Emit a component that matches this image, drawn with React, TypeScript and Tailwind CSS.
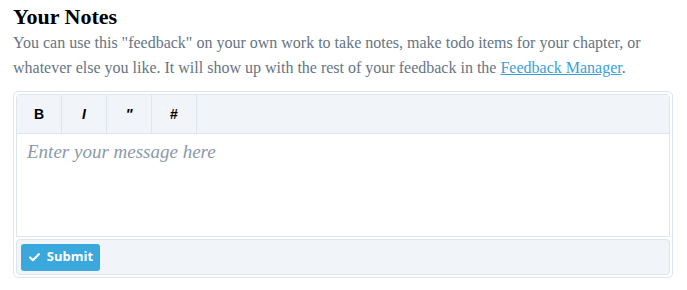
import { Check } from 'lucide-react'

const tools = [
  { label: 'B', cls: '' },
  { label: 'I', cls: 'italic' },
  { label: '"', cls: 'italic text-[15px]' },
  { label: '#', cls: '' },
]

export default function App() {
  return (
    <main className="bg-white px-[13px] pt-[4px] font-['Liberation_Serif',serif]">
      <h2 className="text-[22px] font-bold leading-[26px] text-black">Your Notes</h2>
      <p className="text-[16px] leading-[25px] text-[#667482]">
        You can use this "feedback" on your own work to take notes, make todo items for your chapter, or whatever else you like. It will show up with the rest of your feedback in the{' '}
        <a href="#" className="text-[#3aa0d8] underline">Feedback Manager</a>.
      </p>
      <div className="mt-[11px] w-[660px] rounded-[5px] border border-[#dde5ed] p-[2px]">
        <div className="rounded-t-[4px] border border-[#dde5ed]">
          <div className="flex h-[39px] bg-[#f1f5f9] border-b border-[#dde5ed]">
            {tools.map((t) => (
              <button
                key={t.label}
                className={`flex w-[45px] items-center justify-center border-r border-[#dde5ed] font-['Liberation_Sans',sans-serif] text-[14px] font-bold text-black ${t.cls}`}
              >
                {t.label}
              </button>
            ))}
          </div>
          <div className="h-[102px] bg-white px-[10px] pt-[4px]">
            <p className="text-[19px] italic text-[#8c9aa7]">Enter your message here</p>
          </div>
        </div>
        <div className="mt-[2px] flex h-[36px] items-center rounded-[4px] border border-[#dde5ed] bg-[#f1f5f9] px-[4px]">
          <button className="flex h-[27px] w-[79px] items-center justify-center gap-[6px] rounded-[3px] bg-[#3aa8dc] font-['Open_Sans',sans-serif] text-[13px] font-bold text-white">
            <Check size={13} strokeWidth={4} />
            Submit
          </button>
        </div>
      </div>
    </main>
  )
}
